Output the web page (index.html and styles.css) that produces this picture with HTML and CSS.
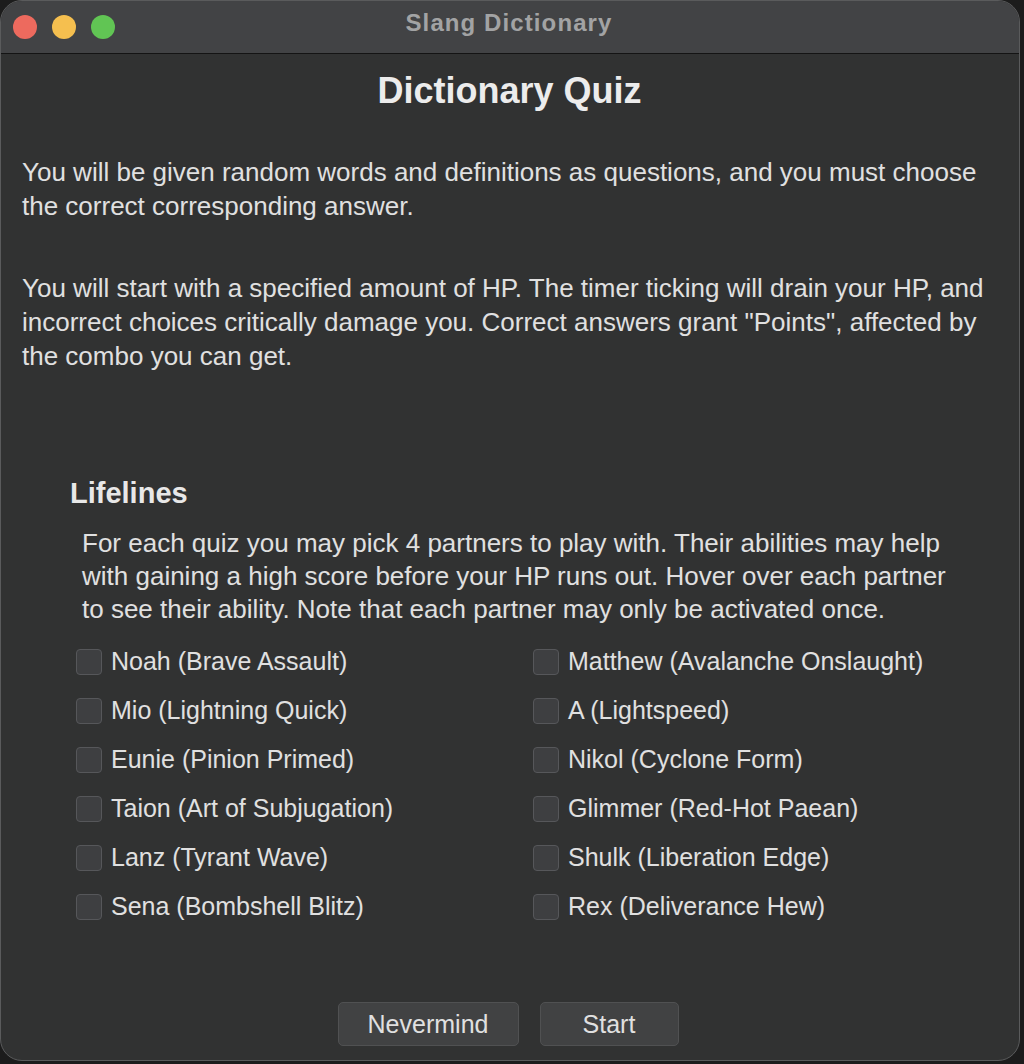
FILE: index.html
```html
<!DOCTYPE html>
<html>
<head>
<meta charset="utf-8">
<link rel="stylesheet" href="styles.css">
</head>
<body>
<div class="window">
  <div class="titlebar">
    <div class="lights">
      <span class="light red"></span>
      <span class="light yellow"></span>
      <span class="light green"></span>
    </div>
    <div class="wintitle">Slang Dictionary</div>
  </div>
  <div class="content">
    <h1 class="heading">Dictionary Quiz</h1>
    <p class="para">You will be given random words and definitions as questions, and you must choose the correct corresponding answer.</p>
    <p class="para second">You will start with a specified amount of HP. The timer ticking will drain your HP, and incorrect choices critically damage you. Correct answers grant "Points", affected by the combo you can get.</p>
    <section class="lifelines">
      <h2 class="subheading">Lifelines</h2>
      <p class="lifepara">For each quiz you may pick 4 partners to play with. Their abilities may help with gaining a high score before your HP runs out. Hover over each partner to see their ability. Note that each partner may only be activated once.</p>
      <div class="grid">
        <label class="check"><span class="box"></span>Noah (Brave Assault)</label>
        <label class="check"><span class="box"></span>Matthew (Avalanche Onslaught)</label>
        <label class="check"><span class="box"></span>Mio (Lightning Quick)</label>
        <label class="check"><span class="box"></span>A (Lightspeed)</label>
        <label class="check"><span class="box"></span>Eunie (Pinion Primed)</label>
        <label class="check"><span class="box"></span>Nikol (Cyclone Form)</label>
        <label class="check"><span class="box"></span>Taion (Art of Subjugation)</label>
        <label class="check"><span class="box"></span>Glimmer (Red-Hot Paean)</label>
        <label class="check"><span class="box"></span>Lanz (Tyrant Wave)</label>
        <label class="check"><span class="box"></span>Shulk (Liberation Edge)</label>
        <label class="check"><span class="box"></span>Sena (Bombshell Blitz)</label>
        <label class="check"><span class="box"></span>Rex (Deliverance Hew)</label>
      </div>
    </section>
    <div class="buttons">
      <button class="btn nevermind">Nevermind</button>
      <button class="btn start">Start</button>
    </div>
  </div>
</div>
</body>
</html>
```
FILE: styles.css
```css
* { box-sizing: border-box; }
html, body { margin: 0; padding: 0; }
body {
  width: 1024px;
  height: 1064px;
  background: #1c1c1c;
  font-family: "Liberation Sans", Arial, sans-serif;
  overflow: hidden;
}
.window {
  width: 1020px;
  height: 1061px;
  background: #313232;
  border-radius: 22px;
  border: 1px solid #5a5b5c;
  overflow: hidden;
  display: flex;
  flex-direction: column;
}
.titlebar {
  height: 53px;
  flex: none;
  background: #424345;
  border-bottom: 1px solid #141414;
  display: flex;
  align-items: center;
  position: relative;
}
.lights {
  display: flex;
  gap: 15px;
  padding-left: 12px;
}
.light {
  width: 24px;
  height: 24px;
  border-radius: 50%;
  display: block;
}
.red { background: #ed6a5e; }
.yellow { background: #f5bf4f; }
.green { background: #61c554; }
.wintitle {
  position: absolute;
  left: 0;
  right: 0;
  top: 8px;
  text-align: center;
  color: #a2a3a4;
  font-weight: bold;
  font-size: 24px;
  letter-spacing: 1.1px;
  line-height: 28px;
  padding-right: 2px;
}
.content {
  flex: 1;
  display: flex;
  flex-direction: column;
  color: #e0e0e0;
  padding: 0 0 0 21px;
}
.heading {
  margin: 17px 0 0 -22px;
  text-align: center;
  font-size: 36px;
  font-weight: bold;
  color: #ececec;
  line-height: 40px;
}
.para {
  margin: 44px 0 0 0;
  font-size: 26px;
  line-height: 34px;
  width: 985px;
}
.para.second {
  margin-top: 48px;
}
.lifelines {
  margin-top: 103px;
  padding-left: 48px;
}
.subheading {
  margin: 0;
  font-size: 29px;
  font-weight: bold;
  color: #e8e8e8;
  line-height: 34px;
}
.lifepara {
  margin: 17px 0 0 12px;
  font-size: 26px;
  line-height: 33px;
  width: 870px;
}
.grid {
  margin: 11px 0 0 6px;
  display: grid;
  grid-template-columns: 457px 457px;
  grid-auto-rows: 49px;
}
.check {
  display: flex;
  align-items: center;
  font-size: 25px;
  height: 49px;
  color: #e0e0e0;
}
.box {
  width: 26px;
  height: 26px;
  border-radius: 4px;
  background: #3e3f41;
  border: 1.5px solid #56575a;
  margin-right: 9px;
  flex: none;
}
.buttons {
  margin-top: auto;
  margin-bottom: 14px;
  display: flex;
  justify-content: center;
  gap: 21px;
  padding-right: 25px;
}
.btn {
  font-family: "Liberation Sans", Arial, sans-serif;
  font-size: 25px;
  color: #e0e0e0;
  background: #414243;
  border: 1px solid #505152;
  border-radius: 5px;
  height: 44px;
  padding: 0;
}
.nevermind { width: 181px; }
.start { width: 139px; }
```
